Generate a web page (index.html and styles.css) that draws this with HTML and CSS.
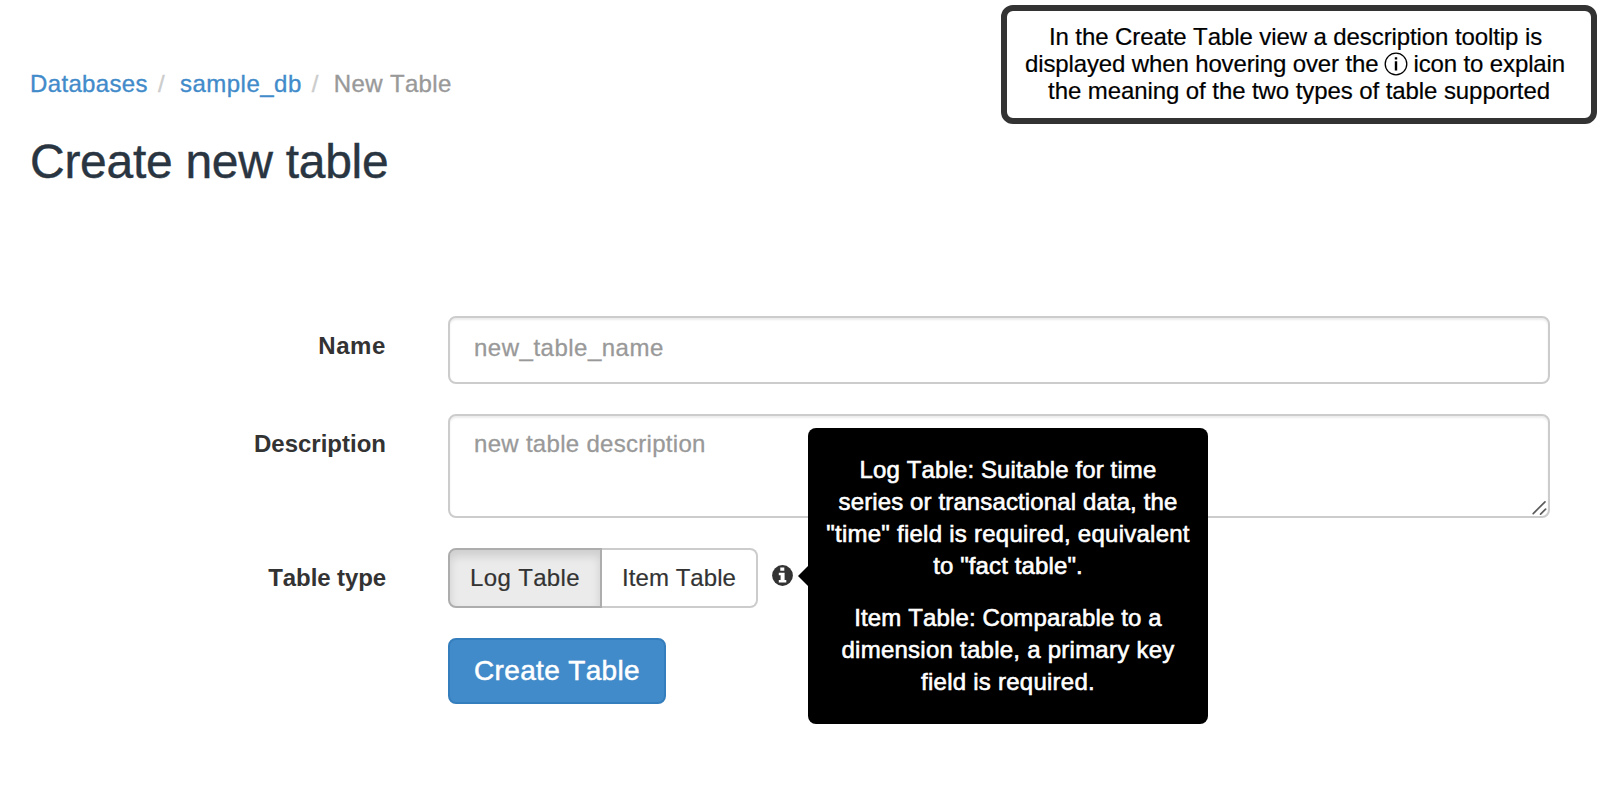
FILE: index.html
```html
<!DOCTYPE html>
<html lang="en">
<head>
<meta charset="utf-8">
<title>Create new table</title>
<link rel="stylesheet" href="styles.css">
</head>
<body>
<div class="page">
  <header class="header">
    <div class="intro">
      <nav class="breadcrumb">
        <a class="crumb crumb-link" href="#">Databases</a>
        <span class="divider">/</span>
        <a class="crumb crumb-link crumb-db" href="#">sample_db</a>
        <span class="divider">/</span>
        <span class="crumb">New Table</span>
      </nav>
      <h1 class="title">Create new table</h1>
    </div>
    <aside class="callout">
      <span class="callout-first">In the Create Table view a description tooltip is</span><br>
      <span class="callout-second">displayed when hovering over the <svg class="callout-icon" viewBox="0 0 24 24"><circle cx="12" cy="12" r="10.8" fill="none" stroke="#000" stroke-width="1.3"/><path d="M10.8 5.2h2.4v2.4h-2.4zM10.8 9.2h2.4v9.4h-2.4z"/></svg> icon to explain</span><br>
      the meaning of the two types of table supported
    </aside>
  </header>

  <form class="form">
    <label class="label label-name" for="name">Name</label>
    <input class="control input" id="name" type="text" placeholder="new_table_name">

    <label class="label label-desc" for="description">Description</label>
    <div class="area-wrap">
      <textarea class="control area" id="description" placeholder="new table description"></textarea>
      <svg class="grip" viewBox="0 0 16 16"><path d="M1.2 13.6 13 1.8M8.6 14.2l5-5" stroke="#5c5c5c" stroke-width="1.7" stroke-linecap="round"/></svg>
    </div>

    <span class="label label-type">Table type</span>
    <div class="type-row">
      <div class="group">
        <button class="option option-active" type="button">Log Table</button>
        <button class="option option-item" type="button">Item Table</button>
      </div>
      <div class="info">
        <svg class="info-icon" viewBox="0 0 21 21"><circle cx="10.5" cy="10.5" r="10.4" fill="#333"/><path fill="#fff" d="M8.3 2.5h4v3.2h-4zM6.8 7.7h5.8v7.2h1.7v2.6H6.8v-2.6h1.8v-4.6H6.8z"/></svg>
        <div class="tooltip" role="tooltip">
          <p class="tip"><span class="tip-tight">Log Table: Suitable for time<br>series or transactional data, the</span><br>"time" field is required, equivalent<br><span class="tip-tight">to "fact table".</span></p>
          <p class="tip"><span class="tip-tight">Item Table: Comparable to a</span><br>dimension table, a primary key<br>field is required.</p>
        </div>
      </div>
    </div>

    <button class="submit" type="button">Create Table</button>
  </form>
</div>
</body>
</html>
```
FILE: styles.css
```css
* { box-sizing: border-box; }
body {
  margin: 0;
  background: #fff;
  color: #333;
  font-family: "Liberation Sans", Arial, sans-serif;
  font-size: 24px;
  line-height: 32px;
  font-kerning: none;
}
.page { height: 806px; overflow: hidden; }
.header {
  display: flex;
  justify-content: space-between;
  align-items: flex-start;
  height: 316px;
  padding: 5px 17px 0 30px;
}
.intro { padding-top: 63px; }
.breadcrumb {
  display: flex;
  white-space: nowrap;
  color: #999;
  letter-spacing: 0.35px;
  -webkit-text-stroke: 0.35px;
}
.crumb-link { color: #428bca; text-decoration: none; }
.crumb-db { letter-spacing: 0.5px; }
.divider { width: 32px; padding-left: 10px; color: #ccc; -webkit-text-stroke: 0.35px; }
.title {
  margin: 33px 0 0;
  color: #2a3542;
  font-size: 48px;
  font-weight: 400;
  line-height: 58px;
  letter-spacing: -0.28px;
  -webkit-text-stroke: 0.4px;
}
.callout {
  width: 596px;
  height: 119px;
  padding: 12px 0 0;
  border: 6px solid #333;
  border-radius: 12px;
  color: #000;
  line-height: 27px;
  text-align: center;
  white-space: nowrap;
  letter-spacing: -0.08px;
  -webkit-text-stroke: 0.2px;
}
.callout-first { margin-right: 7px; letter-spacing: -0.09px; }
.callout-second { margin-right: 8px; letter-spacing: -0.13px; }
.callout-icon { width: 24px; height: 24px; margin: -6px -1px; vertical-align: 2.5px; }

.form {
  display: grid;
  grid-template-columns: 386px 1102px;
  column-gap: 62px;
  row-gap: 30px;
  align-items: start;
}
.label { font-weight: 700; text-align: right; }
.label-name { padding-top: 14px; letter-spacing: 0.6px; }
.label-desc { padding-top: 14px; }
.label-type { padding-top: 14px; letter-spacing: -0.1px; }
.control {
  display: block;
  width: 1102px;
  margin: 0;
  padding: 0 24px;
  border: 2px solid #ccc;
  border-radius: 8px;
  outline: 0;
  background: #fff;
  box-shadow: inset 0 2px 2px rgba(0, 0, 0, 0.075);
  font: 24px/32px "Liberation Sans", Arial, sans-serif;
  font-kerning: none;
}
.control::placeholder { color: #999; opacity: 1; -webkit-text-stroke: 0.3px #999; }
.input { height: 68px; padding-bottom: 4px; letter-spacing: 0.5px; }
.area { height: 104px; padding-top: 12px; resize: none; overflow: hidden; letter-spacing: 0.3px; }
.area-wrap { position: relative; }
.grip { position: absolute; right: 2px; bottom: 2px; width: 16px; height: 16px; }

.type-row { display: flex; align-items: flex-start; }
.group { display: flex; }
.option {
  width: 156px;
  height: 60px;
  margin: 0;
  padding: 0;
  border: 2px solid #ccc;
  border-radius: 0 8px 8px 0;
  background: #fff;
  color: #333;
  font: 24px/32px "Liberation Sans", Arial, sans-serif;
  font-kerning: none;
  letter-spacing: 0.05px;
  -webkit-text-stroke: 0.2px;
}
.option-item { border-left: 0; }
.option-active {
  width: 154px;
  border-color: #adadad;
  border-radius: 8px 0 0 8px;
  background: #ebebeb;
  box-shadow: inset 0 6px 10px rgba(0, 0, 0, 0.125);
  letter-spacing: 0.35px;
}
.info { position: relative; width: 21px; height: 21px; margin: 17px 0 0 14px; }
.info-icon { display: block; width: 21px; height: 21px; }
.tooltip {
  position: absolute;
  z-index: 2;
  left: 36px;
  top: -137px;
  width: 400px;
  height: 296px;
  padding-top: 26px;
  border-radius: 8px;
  background: #000;
  color: #fff;
  text-align: center;
  white-space: nowrap;
  letter-spacing: 0.25px;
  -webkit-text-stroke: 0.6px #fff;
}
.tooltip::before {
  content: "";
  position: absolute;
  left: -10px;
  top: 138px;
  border: 10px solid transparent;
  border-left-width: 0;
  border-right-color: #000;
}
.tip { margin: 0 0 20px; }
.tip-tight { letter-spacing: 0.12px; }
.submit {
  grid-column: 2;
  width: 218px;
  height: 66px;
  margin: 0;
  padding: 0;
  border: 2px solid #357ebd;
  border-radius: 8px;
  background: #428bca;
  color: #fff;
  font: 28px/38px "Liberation Sans", Arial, sans-serif;
  font-kerning: none;
  letter-spacing: 0.35px;
  -webkit-text-stroke: 0.5px #fff;
}
```
